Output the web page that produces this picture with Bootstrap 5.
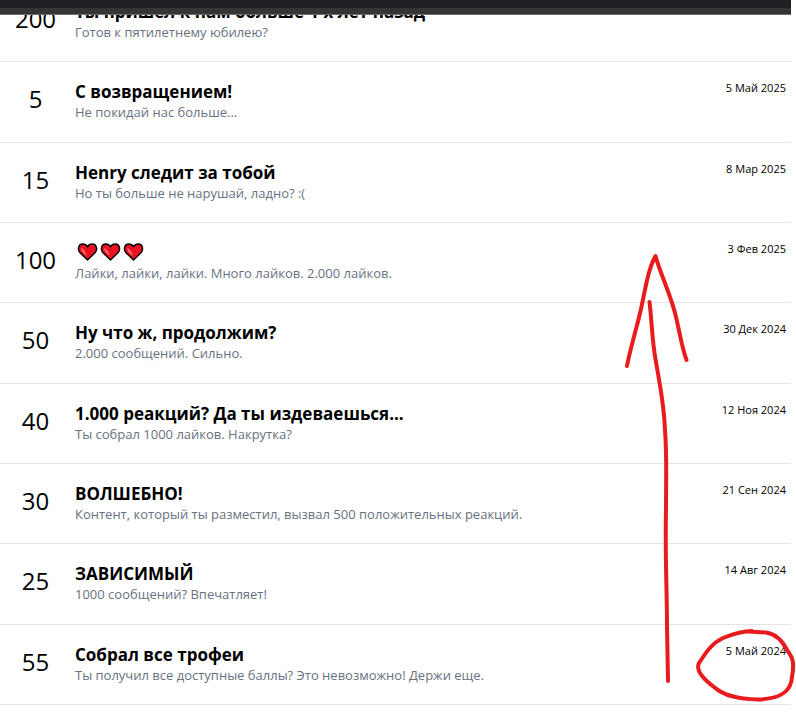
<!DOCTYPE html>
<html lang="ru">
<head>
<meta charset="utf-8">
<meta name="viewport" content="width=device-width, initial-scale=1">
<title>Трофеи</title>
<link href="https://cdn.jsdelivr.net/npm/bootstrap@5.3.0/dist/css/bootstrap.min.css" rel="stylesheet">
<style>
body { font-family: "Open Sans", "Noto Sans", sans-serif; color: #000; background: #fff; }
.page { padding-right: 5px; overflow: hidden; }
.topbar { height: 15px; margin-right: 5px; background: #353535; border-top: 8px solid #202126; border-bottom: 1px solid #6b6b6b; }
/* the list is scrolled a little under the top bar */
.trophies { min-height: calc(100vh + 10px); margin-top: -18px; }
.trophy { border-bottom: 1px solid #e5e5e5; padding: 18px 5px 20px 0; }
.points { width: 71px; font-size: 24px; line-height: 38px; }
.trophy-info { padding: 1px 0 0 4px; }
.trophy-title { font-size: 17px; line-height: 22px; font-weight: 700; }
.trophy-text { font-size: 13px; line-height: 18px; color: #68717f; }
.trophy-date { font-size: 11px; line-height: 16px; }
.hearts { gap: 2px; height: 22px; padding: 0 0 2px 2px; }
.drawing { left: 600px; top: 230px; pointer-events: none; }
</style>
</head>
<body>
<header class="topbar fixed-top"></header>
<main class="page d-flex flex-column position-relative">
<ol class="trophies list-unstyled d-flex flex-column mb-0">
<li class="trophy d-flex flex-fill"><div class="points text-center flex-shrink-0">200</div><div class="trophy-info flex-grow-1"><h2 class="trophy-title mb-0">Ты пришел к нам больше 4-х лет назад</h2><p class="trophy-text mb-0">Готов к пятилетнему юбилею?</p></div></li>
<li class="trophy d-flex flex-fill"><div class="points text-center flex-shrink-0">5</div><div class="trophy-info flex-grow-1"><h2 class="trophy-title mb-0">С возвращением!</h2><p class="trophy-text mb-0">Не покидай нас больше...</p></div><time class="trophy-date text-nowrap" datetime="2025-05-05">5 Май 2025</time></li>
<li class="trophy d-flex flex-fill"><div class="points text-center flex-shrink-0">15</div><div class="trophy-info flex-grow-1"><h2 class="trophy-title mb-0">Henry следит за тобой</h2><p class="trophy-text mb-0">Но ты больше не нарушай, ладно? :(</p></div><time class="trophy-date text-nowrap" datetime="2025-03-08">8 Мар 2025</time></li>
<li class="trophy d-flex flex-fill"><div class="points text-center flex-shrink-0">100</div><div class="trophy-info flex-grow-1"><h2 class="trophy-title hearts d-flex align-items-center mb-0" aria-label="Три сердца">
<svg width="21" height="20" viewBox="0 0 21 20" aria-hidden="true"><defs><g id="heart"><path d="M10.500 18L2.800 10.500C.2 7 1.500 2 5.700 2C7.800 2 9.500 3 10.500 4.800C11.500 3 13.200 2 15.300 2C19.500 2 20.800 7 18.200 10.500Z" fill="#e81224" stroke="#000" stroke-width="1.400" stroke-linejoin="round"/><path d="M4.800 6.500C5 9 7 10.800 9 12.300M6.200 8L7.800 10" fill="none" stroke="#f4775e" stroke-width="1.200" stroke-linecap="round"/></g></defs><use href="#heart"/></svg>
<svg width="21" height="20" viewBox="0 0 21 20" aria-hidden="true"><use href="#heart"/></svg>
<svg width="21" height="20" viewBox="0 0 21 20" aria-hidden="true"><use href="#heart"/></svg>
</h2><p class="trophy-text mb-0">Лайки, лайки, лайки. Много лайков. 2.000 лайков.</p></div><time class="trophy-date text-nowrap" datetime="2025-02-03">3 Фев 2025</time></li>
<li class="trophy d-flex flex-fill"><div class="points text-center flex-shrink-0">50</div><div class="trophy-info flex-grow-1"><h2 class="trophy-title mb-0">Ну что ж, продолжим?</h2><p class="trophy-text mb-0">2.000 сообщений. Сильно.</p></div><time class="trophy-date text-nowrap" datetime="2024-12-30">30 Дек 2024</time></li>
<li class="trophy d-flex flex-fill"><div class="points text-center flex-shrink-0">40</div><div class="trophy-info flex-grow-1"><h2 class="trophy-title mb-0">1.000 реакций? Да ты издеваешься...</h2><p class="trophy-text mb-0">Ты собрал 1000 лайков. Накрутка?</p></div><time class="trophy-date text-nowrap" datetime="2024-11-12">12 Ноя 2024</time></li>
<li class="trophy d-flex flex-fill"><div class="points text-center flex-shrink-0">30</div><div class="trophy-info flex-grow-1"><h2 class="trophy-title mb-0">ВОЛШЕБНО!</h2><p class="trophy-text mb-0">Контент, который ты разместил, вызвал 500 положительных реакций.</p></div><time class="trophy-date text-nowrap" datetime="2024-09-21">21 Сен 2024</time></li>
<li class="trophy d-flex flex-fill"><div class="points text-center flex-shrink-0">25</div><div class="trophy-info flex-grow-1"><h2 class="trophy-title mb-0">ЗАВИСИМЫЙ</h2><p class="trophy-text mb-0">1000 сообщений? Впечатляет!</p></div><time class="trophy-date text-nowrap" datetime="2024-08-14">14 Авг 2024</time></li>
<li class="trophy d-flex flex-fill"><div class="points text-center flex-shrink-0">55</div><div class="trophy-info flex-grow-1"><h2 class="trophy-title mb-0">Собрал все трофеи</h2><p class="trophy-text mb-0">Ты получил все доступные баллы? Это невозможно! Держи еще.</p></div><time class="trophy-date text-nowrap" datetime="2024-05-05">5 Май 2024</time></li>
</ol>
<svg class="drawing position-absolute" width="196" height="475" viewBox="600 230 196 475" fill="none" stroke="#e81c1c" stroke-width="4" stroke-linecap="round" stroke-linejoin="round" aria-hidden="true">
<path d="M627 366C630 349 636 331 641 309C646 285 649 267 655.500 256C661 276 671 295 676 317C680 334 682 348 686.500 360"/>
<path d="M649.500 302C652 322 652 342 656 362C660 386 664 403 665 430C667 456 666 480 666 510C665 560 667 590 667 625L668 681"/>
<path d="M752 631C743 631 733 634 723 638C710 644 704 656 699 663C695 671 706 681 714 687C724 696 738 699 758 699.500C777 699 791 694 792 677C795 661 792 657 787 650C782 640 776 634 766 632.500L749 631.500"/>
</svg>
</main>
<script src="https://cdn.jsdelivr.net/npm/bootstrap@5.3.0/dist/js/bootstrap.bundle.min.js"></script>
</body>
</html>
